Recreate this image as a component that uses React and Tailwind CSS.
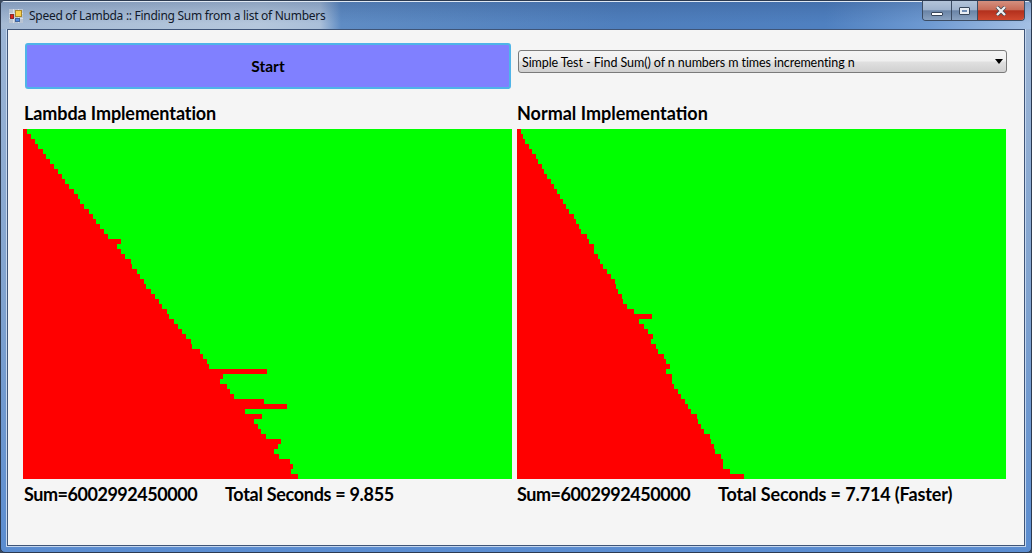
import React from 'react';

const lambdaRows = [
  4, 8, 12, 15, 20, 23, 27, 31, 35, 39, 42, 46, 51, 55, 57, 61, 66, 70, 73, 77, 81, 85, 98, 94, 98, 102, 108, 109, 114, 117,
  121, 123, 128, 132, 136, 139, 144, 146, 151, 155, 159, 163, 168, 169, 177, 180, 184, 186, 244, 200, 197, 204, 207, 211, 241,
  264, 222, 239, 231, 235, 238, 243, 258, 255, 251, 256, 267, 270, 268, 275,
];

const normalRows = [
  4, 6, 8, 12, 15, 19, 21, 25, 27, 30, 34, 37, 40, 43, 46, 49, 52, 57, 59, 62, 64, 70, 72, 77, 77, 81, 83, 86, 90, 94,
  98, 99, 101, 105, 106, 110, 117, 135, 122, 127, 131, 136, 134, 139, 141, 147, 149, 153, 149, 155, 155, 157, 161, 164, 168,
  171, 174, 180, 181, 184, 187, 193, 194, 197, 198, 204, 206, 206, 213, 227,
];

const Chart = ({ rows }) => (
  <div className="w-[489px] h-[350px] bg-[#00ff00]">
    {rows.map((width, i) => (
      <div key={i} className="h-[5px] bg-[#ff0000]" style={{ width }} />
    ))}
  </div>
);

const Panel = ({ title, rows, sum, seconds, className, textClass, titleClass, secondsClass }) => (
  <div className={className}>
    <div className={`h-[19px] mb-[6px] text-[18px] leading-[19px] font-bold text-black ${titleClass} ${textClass}`}>{title}</div>
    <Chart rows={rows} />
    <div className={`flex mt-[5px] text-[18px] leading-[20px] font-bold text-black ${textClass}`}>
      <span className="w-[201px] tracking-[-0.47px]">{sum}</span>
      <span className={secondsClass}>{seconds}</span>
    </div>
  </div>
);

const AppIcon = () => (
  <svg width="14" height="14" viewBox="0 0 14 14" className="shrink-0">
    <rect x="0" y="0" width="14" height="14" fill="#b9c4d2" />
    <path d="M0 4.5H14M0 9.5H14M4.5 0V14M9.5 0V14" stroke="#d9dfe8" />
    <rect x="1.5" y="5.5" width="3" height="4" fill="#e0211c" stroke="#8a2a2a" />
    <rect x="6.5" y="1.5" width="6" height="6" fill="#f8cf4e" stroke="#a8862a" />
    <rect x="6.5" y="9.5" width="4" height="3" fill="#4f8ae0" stroke="#3f639a" />
  </svg>
);

const captionBg = 'bg-[linear-gradient(180deg,#b3c4d9_0%,#9fb3cd_45%,#6a84a6_52%,#8aa2c0_100%)]';

export default function App() {
  return (
    <div className="w-[1032px] h-[553px] bg-[#3b4a5e]">
      <div className="w-full h-full flex flex-col overflow-hidden rounded-[5px] border border-[#2c3a50] font-['Lato',sans-serif] bg-[linear-gradient(180deg,#9fb7d6_0%,#7fa2cf_55%,#5a8cd0_100%)]">
        {/* title bar */}
        <div className="relative h-[28px] shrink-0 flex items-center pl-[8px] gap-[6px] border-t border-[#dfe8f3] bg-[linear-gradient(180deg,rgba(40,70,120,0.28)_0%,rgba(40,70,120,0.12)_40%,rgba(255,255,255,0)_80%),linear-gradient(90deg,#a5bad4_0%,#b5c7dc_25%,#aabfd9_31%,#5f8cc4_33%,#4f7fbd_60%,#4f80c0_80%,#6e9ad2_90%,#a4c0e4_100%)]">
          <AppIcon />
          <span className="font-['Noto_Sans',sans-serif] text-[12px] tracking-[-0.28px] text-[#10182a] pt-px">
            Speed of Lambda :: Finding Sum from a list of Numbers
          </span>
          {/* window buttons */}
          <div className="absolute top-[-1px] right-[6px] flex h-[20px] w-[103px] rounded-b-[4px] border border-t-0 border-[#3b4c63] overflow-hidden">
            <div className={`w-[29px] flex justify-center border-r border-[#3b4c63] ${captionBg}`}>
              <div className="w-[12px] h-[4px] mt-[11px] bg-white border border-[#37465a] rounded-[1px]" />
            </div>
            <div className={`w-[26px] flex justify-center border-r border-[#3b4c63] ${captionBg}`}>
              <div className="w-[11px] h-[8px] mt-[6px] border border-[#37465a] bg-[#e8edf3] p-[2px] pt-[2px] rounded-[1px]">
                <div className="w-full h-full bg-[#6f8db5]" />
              </div>
            </div>
            <div className="flex-1 flex items-center justify-center bg-[linear-gradient(180deg,#d4907f_0%,#c86c58_45%,#b3301d_52%,#d0492f_100%)]">
              <svg width="12" height="10" viewBox="0 0 12 10">
                <path d="M2 1 L10 9 M10 1 L2 9" stroke="#3f4650" strokeWidth="3.8" />
                <path d="M2 1 L10 9 M10 1 L2 9" stroke="#f0f2f4" strokeWidth="2.3" />
              </svg>
            </div>
          </div>
        </div>

        {/* client area */}
        <div className="flex-1 flex px-[6px] pb-[6px]">
          <div className="flex-1 bg-[#f5f5f5] border border-[#3f5578] shadow-[0_0_0_1px_#c4d6ee] flex flex-col pl-[15px] pt-[13px]">
            <div className="flex items-start h-[46px]">
              <button className="w-[486px] h-[46px] ml-[2px] pt-[2px] rounded-[3px] border-2 border-[#4fb4e8] bg-[#8080ff] text-[15.5px] font-bold text-black">
                Start
              </button>
              <div className="relative w-[489px] h-[23px] ml-[7px] mt-[7px] flex items-center pl-[3px] pt-[3px] rounded-[3px] border border-[#7a7a7a] bg-[linear-gradient(180deg,#f4f4f4_0%,#efefef_48%,#e0e0e0_52%,#d0d0d0_100%)] text-[12.5px] tracking-[-0.08px] text-black">
                Simple Test - Find Sum() of n numbers m times incrementing n
                <div className="absolute right-[3px] top-[8px] w-0 h-0 border-x-[4px] border-x-transparent border-t-[5px] border-t-black" />
              </div>
            </div>
            <div className="flex mt-[15px]">
              <Panel
                title="Lambda Implementation"
                rows={lambdaRows}
                sum="Sum=6002992450000"
                seconds="Total Seconds = 9.855"
                className="w-[494px]"
                textClass="pl-px"
                titleClass="tracking-[-0.1px]"
                secondsClass="tracking-[-0.3px]"
              />
              <Panel
                title="Normal Implementation"
                rows={normalRows}
                sum="Sum=6002992450000"
                seconds="Total Seconds = 7.714 (Faster)"
                textClass=""
                titleClass=""
                secondsClass="tracking-[-0.13px]"
              />
            </div>
          </div>
        </div>
      </div>
    </div>
  );
}
